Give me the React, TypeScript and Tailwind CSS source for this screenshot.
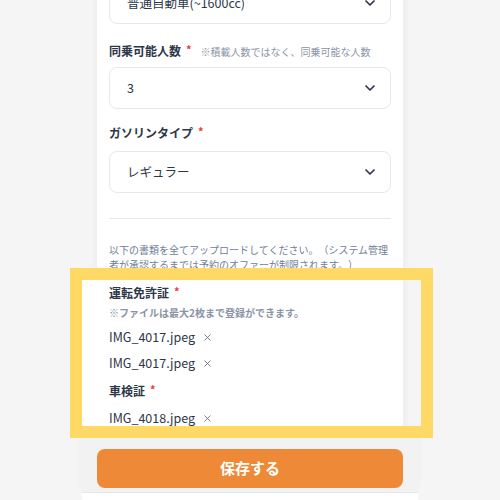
import { ChevronDown, X } from "lucide-react";

const font = { fontFamily: '"Noto Sans CJK JP", "Noto Sans", sans-serif' };

function Select({ value }: { value: string }) {
  return (
    <div className="h-[42px] rounded-lg border border-[#e3e8f0] bg-white flex items-center justify-between pl-[17px] pr-3">
      <span className="text-[12.5px] text-[#2d3748]">{value}</span>
      <ChevronDown size={16} strokeWidth={2.6} className="text-[#2d3748]" />
    </div>
  );
}

function Label({ text, note }: { text: string; note?: string }) {
  return (
    <div className="flex items-center h-5">
      <span className="text-[12px] font-bold text-[#2d3748]">{text}</span>
      <span className="text-[11px] font-bold text-[#e53e3e] ml-[5px] -mt-[3px]">*</span>
      {note && <span className="text-[10px] text-[#8a94a6] ml-[9px]">{note}</span>}
    </div>
  );
}

function FileRow({ name }: { name: string }) {
  return (
    <div className="flex items-center h-5 gap-[7px] text-[#2d3748]">
      <span className="text-[12.5px]">{name}</span>
      <X size={11} strokeWidth={1.6} className="text-[#4a5568]" />
    </div>
  );
}

export default function App() {
  return (
    <div className="relative h-[500px] overflow-hidden bg-[#f5f5f5]" style={font}>
      <div className="w-[336px] mx-auto">
        <div className="mx-[15px] -mt-[18px] bg-white px-3 pb-[10px] shadow-[0_0_8px_rgba(0,0,0,0.06)]">
          <Select value="普通自動車(~1600cc)" />
          <div className="mt-[17px]">
            <Label text="同乗可能人数" note="※積載人数ではなく、同乗可能な人数" />
          </div>
          <div className="mt-[6px]">
            <Select value="3" />
          </div>
          <div className="mt-[14px]">
            <Label text="ガソリンタイプ" />
          </div>
          <div className="mt-[8px]">
            <Select value="レギュラー" />
          </div>
          <div className="mt-[25px] border-t border-[#e3e8f0]" />
          <p className="mt-[23px] text-[10px] leading-[15px] text-[#718096] [text-spacing-trim:space-all]">
            以下の書類を全てアップロードしてください。（システム管理者が承認するまでは予約のオファーが制限されます。）
          </p>
          <div className="mt-[11px]">
            <Label text="運転免許証" />
          </div>
          <p className="mt-[2px] text-[10px] leading-4 font-bold text-[#8a94a6]">
            ※ファイルは最大2枚まで登録ができます。
          </p>
          <div className="mt-[6px] flex flex-col gap-[6px]">
            <FileRow name="IMG_4017.jpeg" />
            <FileRow name="IMG_4017.jpeg" />
          </div>
          <div className="mt-[8px]">
            <Label text="車検証" />
          </div>
          <div className="mt-[7px]">
            <FileRow name="IMG_4018.jpeg" />
          </div>
        </div>
        <div className="bg-[#f2f2f2] px-[15px] pt-[11px] pb-[4px] shadow-[0_-3px_6px_rgba(0,0,0,0.04)]">
          <button className="w-full h-[39px] rounded-lg bg-[#ee8a37] text-white text-[15px] font-bold">
            保存する
          </button>
        </div>
        <div className="h-[20px] bg-white border-t border-[#e3e8f0]" />
      </div>

      <div className="absolute left-[82px] top-[280px] w-[15px] h-[146px] bg-white" />
      <div className="absolute left-[70px] top-[268px] w-[363px] h-[170px] border-[12px] border-[#ffd966]" />
    </div>
  );
}
